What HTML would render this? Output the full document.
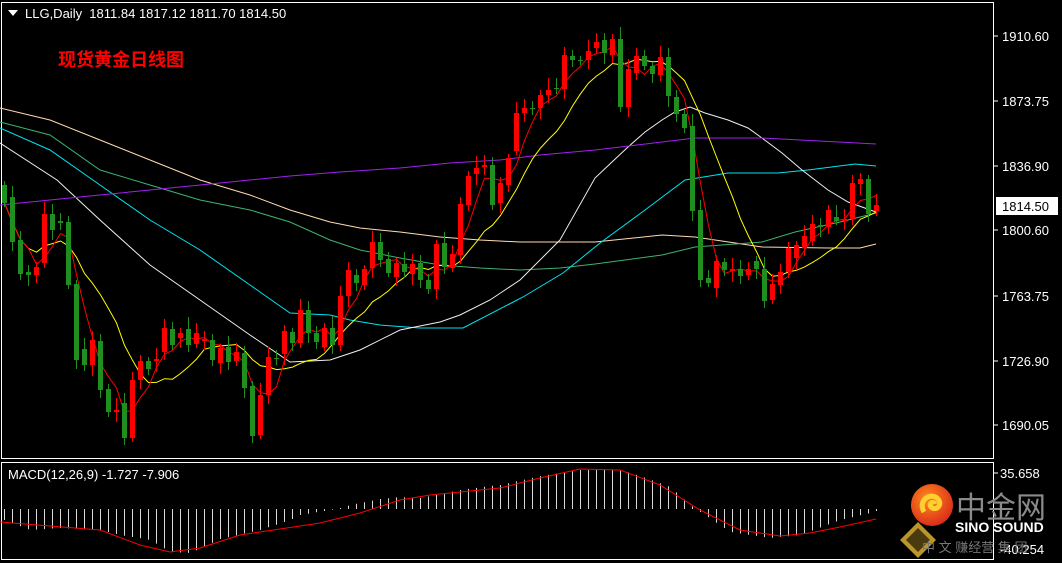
<!DOCTYPE html>
<html><head><meta charset="utf-8"><style>
html,body{margin:0;padding:0;background:#000;width:1062px;height:563px;overflow:hidden}
svg{display:block}
text{font-family:"Liberation Sans","Noto Sans CJK SC",sans-serif}
</style></head><body>
<svg id="s" width="1062" height="563" viewBox="0 0 1062 563" xmlns="http://www.w3.org/2000/svg">
<rect width="1062" height="563" fill="#000"/>
<rect x="1.5" y="2.5" width="992" height="456" fill="none" stroke="#fff" stroke-width="1"/>
<rect x="1.5" y="462.5" width="992" height="97" fill="none" stroke="#fff" stroke-width="1"/>
<g id="lines"></g>
<g id="candles"></g>
<g id="macd"></g>
<polygon points="8,10 18,10 13,16" fill="#fff"/>
<text x="25" y="18" font-size="13" fill="#fff">LLG,Daily&#160; 1811.84 1817.12 1811.70 1814.50</text>
<text x="58" y="66" font-size="18" font-weight="bold" fill="#ff0000" font-family="'Noto Serif CJK SC','Noto Sans CJK SC',serif">现货黄金日线图</text>
<text x="8" y="479" font-size="13" fill="#fff">MACD(12,26,9) -1.727 -7.906</text>
<g font-size="13" fill="#fff">
<line x1="994" y1="36" x2="998" y2="36" stroke="#fff"/><text x="1002" y="41">1910.60</text>
<line x1="994" y1="101" x2="998" y2="101" stroke="#fff"/><text x="1002" y="106">1873.75</text>
<line x1="994" y1="166" x2="998" y2="166" stroke="#fff"/><text x="1002" y="171">1836.90</text>
<line x1="994" y1="230" x2="998" y2="230" stroke="#fff"/><text x="1002" y="235">1800.60</text>
<line x1="994" y1="296" x2="998" y2="296" stroke="#fff"/><text x="1002" y="301">1763.75</text>
<line x1="994" y1="361" x2="998" y2="361" stroke="#fff"/><text x="1002" y="366">1726.90</text>
<line x1="994" y1="425" x2="998" y2="425" stroke="#fff"/><text x="1002" y="430">1690.05</text>
<rect x="996" y="197" width="62" height="18" fill="#fff"/>
<text x="1002" y="211" fill="#000">1814.50</text>
<line x1="994" y1="473" x2="998" y2="473" stroke="#fff"/><text x="1000" y="478">35.658</text>
<text x="1000" y="554">-40.254</text>
</g>
<defs><radialGradient id="lg" cx="0.4" cy="0.35" r="0.7"><stop offset="0" stop-color="#ff8a1c"/><stop offset="1" stop-color="#d8281a"/></radialGradient></defs>
<polygon points="900,540 918,522 936,540 918,558" fill="#b8962a"/>
<polygon points="906,540 918,528 930,540 918,552" fill="#4a3a10"/>
<circle cx="932" cy="505" r="21" fill="url(#lg)"/>
<path d="M924,512 C918,502 928,492 937,498 C944,504 936,512 931,507 C928,503 934,501 935,504" fill="none" stroke="#ffd030" stroke-width="5"/>
<text x="956" y="518" font-size="30" fill="#8a8a8a" font-family="'Noto Sans CJK SC',sans-serif">中金网</text>
<text x="955" y="532" font-size="14" font-weight="bold" fill="#fff">SINO SOUND</text>
<text x="922" y="552" font-size="13" fill="#777" font-family="'Noto Sans CJK SC',sans-serif">中 文  赚经营 集 团</text>
</svg>
<script>
var C=[[4,185,203,'g'],[12,197,242,'g'],[20,240,274,'g'],[28,272,275,'g'],[36,267,275,'r'],[44,214,263,'r'],[52,214,230,'g'],[60,221,223,'g'],[68,222,285,'g'],[76,284,360,'g'],[84,349,365,'g'],[92,340,365,'r'],[100,341,390,'g'],[108,389,412,'g'],[116,410,412,'r'],[124,403,438,'g'],[132,380,438,'r'],[140,361,380,'r'],[148,361,369,'g'],[156,359,361,'r'],[164,328,352,'r'],[172,329,345,'g'],[180,333,338,'r'],[188,329,345,'g'],[196,333,344,'r'],[204,339,341,'r'],[212,340,360,'g'],[220,348,363,'r'],[228,347,362,'g'],[236,352,361,'r'],[244,353,388,'g'],[252,386,436,'g'],[260,395,435,'r'],[268,357,395,'r'],[276,358,359,'g'],[284,331,354,'r'],[292,332,343,'g'],[300,310,343,'r'],[308,310,333,'g'],[316,333,342,'g'],[324,328,347,'r'],[332,328,345,'g'],[340,296,345,'r'],[348,270,296,'r'],[356,275,283,'g'],[364,269,285,'r'],[372,242,268,'r'],[380,242,260,'g'],[388,259,273,'g'],[396,263,277,'r'],[404,264,272,'g'],[412,264,274,'r'],[420,263,280,'g'],[428,280,289,'g'],[436,244,289,'r'],[444,243,267,'g'],[452,254,268,'r'],[460,204,255,'r'],[468,176,205,'r'],[476,168,174,'r'],[484,165,167,'r'],[492,165,205,'g'],[500,183,203,'r'],[508,158,185,'r'],[516,113,151,'r'],[524,108,113,'r'],[532,108,109,'g'],[540,95,108,'r'],[548,90,95,'r'],[556,88,89,'g'],[564,55,89,'r'],[572,56,60,'g'],[580,60,61,'g'],[588,51,60,'r'],[596,42,48,'r'],[604,40,53,'g'],[612,39,55,'r'],[620,39,107,'g'],[628,69,107,'r'],[636,56,73,'r'],[644,56,66,'g'],[652,66,74,'g'],[660,57,75,'r'],[668,57,96,'g'],[676,97,114,'g'],[684,114,128,'g'],[692,126,211,'g'],[700,210,280,'g'],[708,278,283,'g'],[716,261,288,'r'],[724,262,270,'g'],[732,269,271,'r'],[740,269,276,'g'],[748,269,275,'r'],[756,261,269,'g'],[764,269,301,'g'],[772,284,300,'r'],[780,272,285,'r'],[788,248,272,'r'],[796,245,258,'r'],[804,236,248,'r'],[812,224,241,'r'],[820,225,227,'g'],[828,210,227,'r'],[836,217,221,'g'],[844,219,221,'r'],[852,183,219,'r'],[860,179,184,'r'],[868,179,214,'g'],[876,205,211,'r']];
var NS='http://www.w3.org/2000/svg';
function el(p,t,a){var e=document.createElementNS(NS,t);for(var k in a)e.setAttribute(k,a[k]);p.appendChild(e);return e;}
var cg=document.getElementById('candles'),lg=document.getElementById('lines'),mg=document.getElementById('macd');
var closes=[];
C.forEach(function(c,i){var col=c[3]=='r'?'#ff0000':'#1f8f1f';
 var wt=c[1]-4-(i*7%9),wb=c[2]+4+(i*5%8);
 el(cg,'line',{x1:c[0]+.5,x2:c[0]+.5,y1:wt,y2:wb,stroke:col,'stroke-width':1});
 el(cg,'rect',{x:c[0]-2,y:c[1],width:5,height:Math.max(1,c[2]-c[1]),fill:col});
 closes.push(c[3]=='r'?c[1]:c[2]);});
function sma(n){var pts=[];for(var i=0;i<closes.length;i++){var s=0,k=0;for(var j=Math.max(0,i-n+1);j<=i;j++){s+=closes[j];k++;}pts.push((C[i][0]+.5)+','+(s/k).toFixed(1));}return pts.join(' ');}
function pl(pts,col,w,g){el(g||lg,'polyline',{points:pts,fill:'none',stroke:col,'stroke-width':w||1});}
pl('0,108 50,120 100,140 150,160 200,180 250,195 290,210 330,222 360,228 400,232 440,237 480,240 520,242 560,242 595,242 662,235 695,237 762,247 828,248 860,248 876,244','#ffdcb0');
pl('0,122 50,135 100,170 150,185 200,200 250,210 290,222 330,240 360,250 400,258 440,265 480,268 520,270 560,268 595,264 662,255 695,247 762,242 795,232 840,222 876,213','#3cb371');
pl('0,128 50,150 100,185 150,220 200,250 250,285 290,313 330,315 350,320 380,325 420,328 463,328 523,297 563,273 600,243 645,210 685,180 728,173 778,173 808,170 855,164 876,166','#00e5ee');
pl('0,143 57,180 100,220 150,265 200,300 250,335 290,362 330,360 360,350 400,330 440,322 460,315 490,300 520,280 560,240 595,178 612,162 628,147 645,132 662,120 675,112 690,107 705,113 728,120 748,128 762,138 782,153 802,170 828,190 848,202 876,212','#f0f0f0');
pl('0,205 50,200 100,195 150,190 200,185 250,180 290,176 340,172 400,168 450,163 500,160 540,155 595,150 695,138 762,138 820,141 876,144','#a020f0');
pl(sma(10),'#ffff00');
pl(sma(4),'#ff0000');
var H=[[4,520],[30,530],[60,528],[100,530],[120,535],[150,540],[170,552],[190,553],[220,539],[260,530],[290,520],[300,515],[330,510],[340,508],[350,505],[380,499],[400,497],[420,498],[460,490],[490,486],[500,485],[540,476],[580,470],[620,470],[640,476],[670,487],[690,505],[700,512],[730,532],[770,538],[800,535],[840,520],[870,513],[876,511]];
function interp(x){for(var i=1;i<H.length;i++){if(x<=H[i][0]){var a=H[i-1],b=H[i];return a[1]+(b[1]-a[1])*(x-a[0])/(b[0]-a[0]);}}return H[H.length-1][1];}
C.forEach(function(c){var y=interp(c[0]);el(mg,'line',{x1:c[0]+.5,x2:c[0]+.5,y1:509,y2:y.toFixed(1),stroke:'#d8d8d8','stroke-width':1});});
pl('0,522 50,526 100,530 140,545 170,552 200,548 240,535 280,529 320,523 360,513 400,500 430,495 460,492 500,488 540,478 580,469 620,470 660,485 700,510 740,530 780,536 810,533 840,527 876,519','#ff0000',1,mg);
</script>
</body></html>
